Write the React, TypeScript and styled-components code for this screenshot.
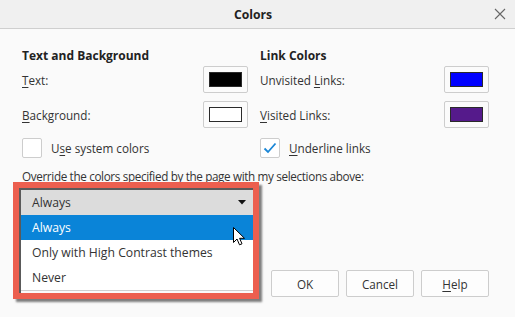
import React from "react";
import styled, { createGlobalStyle } from "styled-components";

const Global = createGlobalStyle`
  html, body { margin: 0; padding: 0; background: #fafafa; }
  body { font-family: "Open Sans", "Noto Sans", sans-serif; color: #333; }
  * { box-sizing: border-box; }
`;

const FS = "11.7px";

const Window = styled.div`
  width: 515px;
  height: 317px;
  background: #fafafa;
  display: flex;
  flex-direction: column;
  overflow: hidden;
`;

const TitleBar = styled.div`
  height: 29px;
  flex: none;
  background: #f0f0f0;
  border-bottom: 1px solid #cfcfcf;
  display: grid;
  grid-template-columns: 1fr auto 1fr;
  align-items: center;
  padding: 0 9px 0 0;
`;

const Title = styled.div`
  grid-column: 2;
  font-size: 12.2px;
  font-weight: 700;
  color: #222;
`;

const Close = styled.div`
  grid-column: 3;
  justify-self: end;
  display: flex;
  align-items: center;
`;

const Body = styled.div`
  padding: 18px 26px 0 22px;
  display: flex;
  flex-direction: column;
`;

const Columns = styled.div`
  display: grid;
  grid-template-columns: 226px 229px;
  column-gap: 12px;
`;

const Column = styled.div`
  display: flex;
  flex-direction: column;
`;

const Heading = styled.div`
  font-size: 12px;
  font-weight: 700;
  line-height: 18px;
  color: #222;
  margin-bottom: 1px;
`;

const ColorRow = styled.div<{ $gap: number }>`
  display: flex;
  align-items: center;
  justify-content: space-between;
  height: 27px;
  margin-bottom: ${(p) => p.$gap}px;
`;

const Label = styled.span`
  font-size: ${FS};
  color: #333;
`;

const U = styled.span`
  text-decoration: underline;
  text-underline-offset: 2px;
`;

const ColorButton = styled.div`
  width: 45px;
  height: 27px;
  border: 1px solid #cdcdcd;
  border-radius: 2px;
  background: #fbfbfb;
  display: flex;
  align-items: center;
  justify-content: center;
`;

const Swatch = styled.div<{ $color: string }>`
  width: 33px;
  height: 15px;
  border: 1px solid #2a2a2a;
  background: ${(p) => p.$color};
`;

const CheckRow = styled.div`
  display: flex;
  align-items: center;
  height: 20px;
  gap: 9px;
`;

const CheckBox = styled.div`
  width: 20px;
  height: 20px;
  border: 1px solid #cdcdcd;
  border-radius: 2px;
  background: #fff;
  display: flex;
  align-items: center;
  justify-content: center;
`;

const Override = styled.div`
  margin-top: 9px;
  font-size: ${FS};
  letter-spacing: -0.35px;
  line-height: 18px;
  color: #333;
`;

const SelectAnchor = styled.div`
  position: relative;
  margin-top: 5px;
  margin-left: -1px;
  width: 232px;
`;

const SelectField = styled.div`
  height: 25px;
  background: #dcdcdc;
  display: flex;
  align-items: center;
  justify-content: space-between;
  padding: 0 7px 0 11px;
  font-size: 12.2px;
  color: #333;
`;

const Popup = styled.div`
  position: absolute;
  left: 0;
  right: 0;
  top: 100%;
  background: #fff;
  border-bottom: 1px solid #cfcfcf;
  z-index: 2;
`;

const Option = styled.div<{ $active?: boolean }>`
  height: 25px;
  display: flex;
  align-items: center;
  padding-left: 11px;
  font-size: 12.2px;
  background: ${(p) => (p.$active ? "#0a84d8" : "#fff")};
  color: ${(p) => (p.$active ? "#fff" : "#333")};
`;

const Frame = styled.div`
  position: absolute;
  left: -8px;
  top: -8px;
  right: -6px;
  bottom: -84px;
  border: 6px solid #ec5f4f;
  box-shadow: inset 2px 2px 0 #5a5a5a, 3px 3px 2px rgba(0, 0, 0, 0.5);
  z-index: 3;
  pointer-events: none;
`;

const Cursor = styled.svg`
  position: absolute;
  left: 212px;
  top: 37px;
  z-index: 4;
`;

const Buttons = styled.div`
  margin-top: 55px;
  display: flex;
  justify-content: flex-end;
  gap: 7px;
`;

const Button = styled.div`
  width: 68px;
  height: 27px;
  border: 1px solid #cdcdcd;
  border-radius: 2px;
  background: #fdfdfd;
  display: flex;
  align-items: center;
  justify-content: center;
  font-size: ${FS};
  color: #333;
`;

export default function App() {
  return (
    <>
      <Global />
      <Window>
        <TitleBar>
          <Title>Colors</Title>
          <Close>
            <svg width="12" height="12" viewBox="0 0 12 12">
              <path d="M1 1 L11 11 M11 1 L1 11" stroke="#666" strokeWidth="1.1" />
            </svg>
          </Close>
        </TitleBar>
        <Body>
          <Columns>
            <Column>
              <Heading>Text and Background</Heading>
              <ColorRow $gap={8}>
                <Label><U>T</U>ext:</Label>
                <ColorButton><Swatch $color="#000000" /></ColorButton>
              </ColorRow>
              <ColorRow $gap={10}>
                <Label><U>B</U>ackground:</Label>
                <ColorButton><Swatch $color="#ffffff" /></ColorButton>
              </ColorRow>
              <CheckRow>
                <CheckBox />
                <Label>U<U>s</U>e system colors</Label>
              </CheckRow>
            </Column>
            <Column>
              <Heading>Link Colors</Heading>
              <ColorRow $gap={8}>
                <Label>Unvisited <U>L</U>inks:</Label>
                <ColorButton><Swatch $color="#0000ff" /></ColorButton>
              </ColorRow>
              <ColorRow $gap={10}>
                <Label><U>V</U>isited Links:</Label>
                <ColorButton><Swatch $color="#551a8b" /></ColorButton>
              </ColorRow>
              <CheckRow>
                <CheckBox>
                  <svg width="14" height="12" viewBox="0 0 14 12">
                    <path d="M1.5 6.5 L5 10 L12.5 1.5" fill="none" stroke="#1a86d6" strokeWidth="1.8" />
                  </svg>
                </CheckBox>
                <Label><U>U</U>nderline links</Label>
              </CheckRow>
            </Column>
          </Columns>
          <Override>Override the colors specified by the page with my selections above:</Override>
          <SelectAnchor>
            <SelectField>
              <span>Always</span>
              <svg width="8" height="5" viewBox="0 0 8 5">
                <path d="M0 0 H8 L4 4.5 Z" fill="#111" />
              </svg>
            </SelectField>
            <Popup>
              <Option $active>Always</Option>
              <Option>Only with High Contrast themes</Option>
              <Option>Never</Option>
            </Popup>
            <Frame />
            <Cursor width="13" height="19" viewBox="0 0 13 19">
              <path d="M0.5 0.5 L0.5 15.5 L4 12 L6.5 17.8 L9 16.8 L6.6 11.3 L11.5 11.3 Z" fill="#fff" stroke="#000" strokeWidth="1" />
            </Cursor>
          </SelectAnchor>
          <Buttons>
            <Button>OK</Button>
            <Button>Cancel</Button>
            <Button><U>H</U>elp</Button>
          </Buttons>
        </Body>
      </Window>
    </>
  );
}
